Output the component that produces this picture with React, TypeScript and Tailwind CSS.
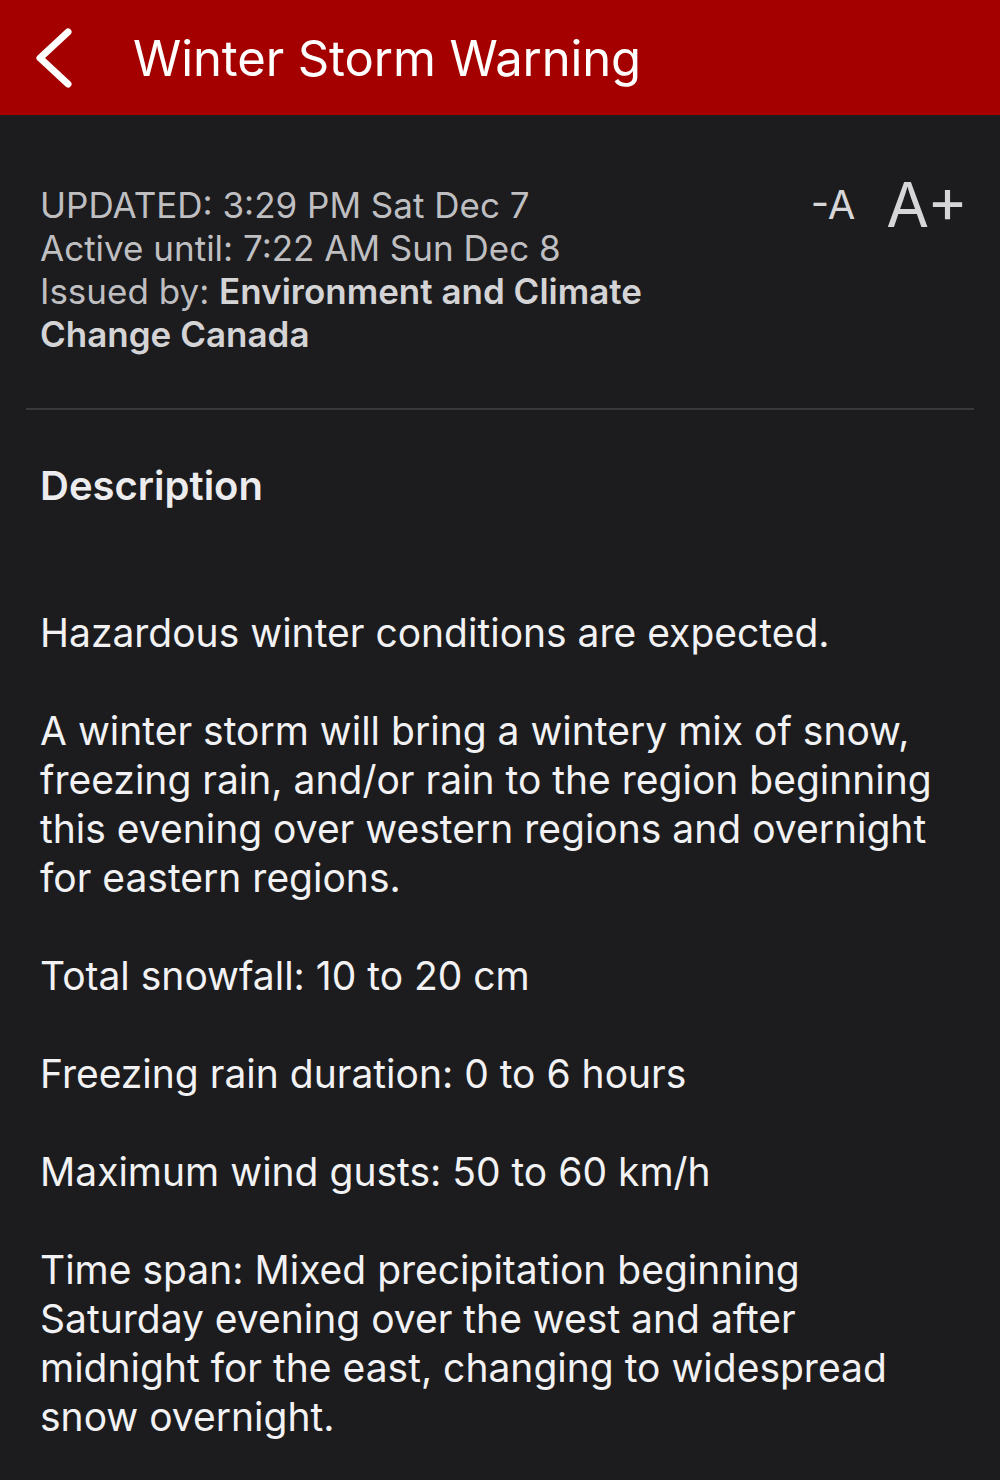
import React from 'react';

const paragraphs = [
  'Hazardous winter conditions are expected.',
  'A winter storm will bring a wintery mix of snow, freezing rain, and/or rain to the region beginning this evening over western regions and overnight for eastern regions.',
  'Total snowfall: 10 to 20 cm',
  'Freezing rain duration: 0 to 6 hours',
  'Maximum wind gusts: 50 to 60 km/h',
  'Time span: Mixed precipitation beginning Saturday evening over the west and after midnight for the east, changing to widespread snow overnight.',
];

const App: React.FC = () => {
  return (
    <div className="w-[1000px] min-h-[1480px] bg-[#1c1c1e] font-['Inter',sans-serif]">
      {/* Header bar */}
      <div className="h-[115px] bg-[#a50000] flex items-center">
        <div className="w-[133px] pl-[30px] flex items-center">
          <svg width="44" height="64" viewBox="0 0 44 64" fill="none">
            <path d="M38 6 L10 32 L38 58" stroke="white" strokeWidth="7" strokeLinecap="round" strokeLinejoin="round" />
          </svg>
        </div>
        <h1 className="text-white text-[49px] leading-none tracking-[-0.1px] mt-[2px]">Winter Storm Warning</h1>
      </div>

      {/* Meta info */}
      <div className="flex justify-between items-start pt-[69px] pl-[40px] pr-[32px]">
        <div className="text-[#bfbfc2] text-[35px] leading-[43px]">
          <div>UPDATED: 3:29 PM Sat Dec 7</div>
          <div>Active until: 7:22 AM Sun Dec 8</div>
          <div className="w-[640px]">
            Issued by: <span className="font-semibold text-[#d4d4d6]">Environment and Climate Change Canada</span>
          </div>
        </div>
        <div className="flex items-start gap-[31px] text-[#d6d6d8]">
          <span className="text-[40px] leading-none mt-[1px]">-A</span>
          <span className="text-[62px] leading-none mt-[-10px]">A+</span>
        </div>
      </div>

      {/* Divider */}
      <div className="mx-[26px] mt-[52px] h-[2px] bg-[#39393c]" />

      {/* Description */}
      <div className="px-[40px] pt-[56px]">
        <h2 className="text-[#ececee] text-[40px] font-semibold leading-none">Description</h2>
        <div className="mt-[102px] text-[#f2f2f4] text-[39px] leading-[49px] flex flex-col gap-[49px]">
          {paragraphs.map((p, i) => (
            <p key={i}>{p}</p>
          ))}
        </div>
      </div>
    </div>
  );
};

export default App;
